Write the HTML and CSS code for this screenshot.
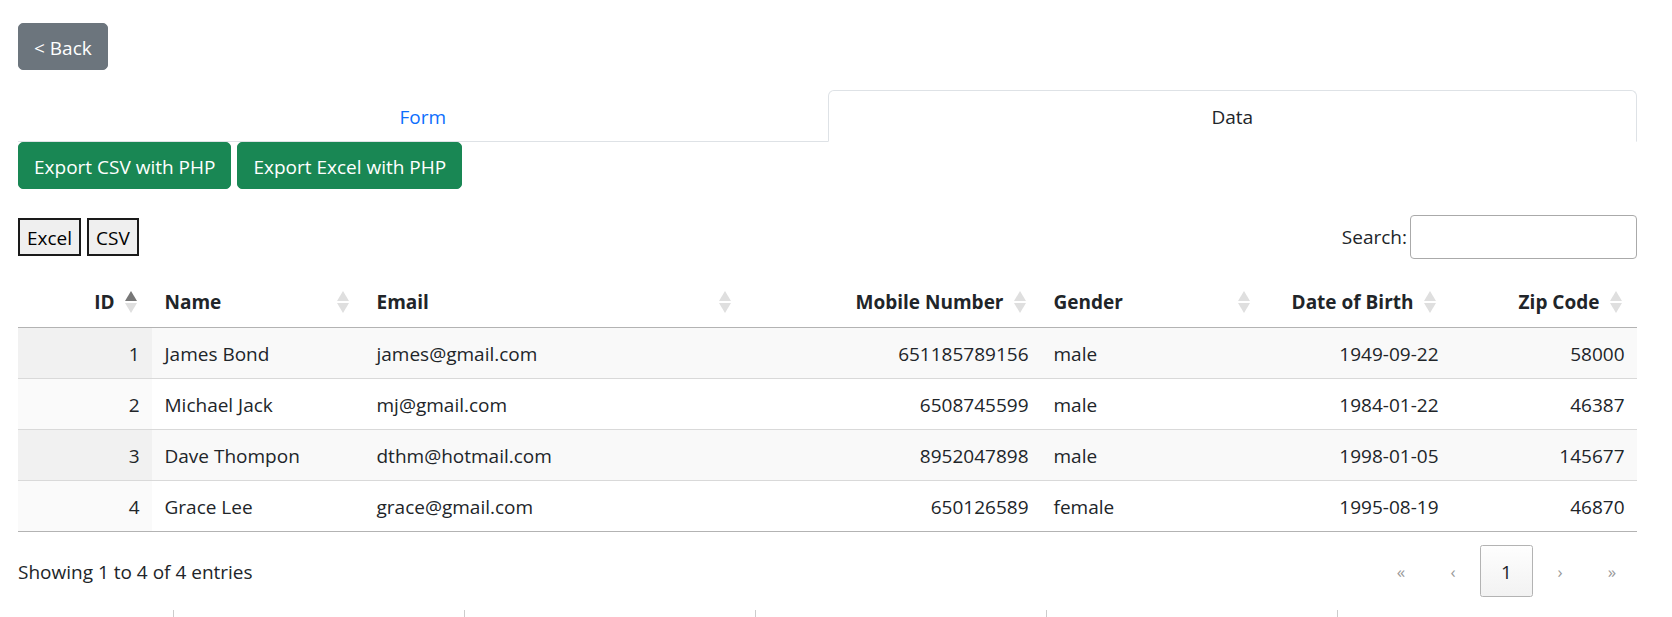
FILE: index.html
```html
<!DOCTYPE html>
<html lang="en">
<head>
    <meta charset="UTF-8">
    <meta name="viewport" content="width=device-width, initial-scale=1.0">
    <title>Users Data</title>
    <link rel="stylesheet" href="styles.css">
</head>
<body>
    <div class="page">
        <div class="back-row">
            <a class="btn btn-back" href="#">&lt; Back</a>
        </div>

        <ul class="tabs">
            <li><a href="#">Form</a></li>
            <li class="active"><a href="#">Data</a></li>
        </ul>

        <div class="exports">
            <button class="btn btn-green">Export CSV with PHP</button>
            <button class="btn btn-green">Export Excel with PHP</button>
        </div>

        <div class="dt-top">
            <div class="dt-buttons">
                <button>Excel</button>
                <button>CSV</button>
            </div>
            <label class="dt-search">Search:<input type="search"></label>
        </div>

        <table class="data">
            <colgroup>
                <col style="width: 134px">
                <col style="width: 212px">
                <col style="width: 382px">
                <col style="width: 295px">
                <col style="width: 224px">
                <col style="width: 186px">
                <col style="width: 186px">
            </colgroup>
            <thead>
                <tr>
                    <th class="num">ID<span class="sort asc"></span></th>
                    <th>Name<span class="sort"></span></th>
                    <th>Email<span class="sort"></span></th>
                    <th class="num">Mobile Number<span class="sort"></span></th>
                    <th>Gender<span class="sort"></span></th>
                    <th class="num">Date of Birth<span class="sort"></span></th>
                    <th class="num">Zip Code<span class="sort"></span></th>
                </tr>
            </thead>
            <tbody>
                <tr>
                    <td class="num sorted">1</td>
                    <td>James Bond</td>
                    <td>james@gmail.com</td>
                    <td class="num">651185789156</td>
                    <td>male</td>
                    <td class="num">1949-09-22</td>
                    <td class="num">58000</td>
                </tr>
                <tr>
                    <td class="num sorted">2</td>
                    <td>Michael Jack</td>
                    <td>mj@gmail.com</td>
                    <td class="num">6508745599</td>
                    <td>male</td>
                    <td class="num">1984-01-22</td>
                    <td class="num">46387</td>
                </tr>
                <tr>
                    <td class="num sorted">3</td>
                    <td>Dave Thompon</td>
                    <td>dthm@hotmail.com</td>
                    <td class="num">8952047898</td>
                    <td>male</td>
                    <td class="num">1998-01-05</td>
                    <td class="num">145677</td>
                </tr>
                <tr>
                    <td class="num sorted">4</td>
                    <td>Grace Lee</td>
                    <td>grace@gmail.com</td>
                    <td class="num">650126589</td>
                    <td>female</td>
                    <td class="num">1995-08-19</td>
                    <td class="num">46870</td>
                </tr>
            </tbody>
        </table>

        <div class="dt-bottom">
            <div class="dt-info">Showing 1 to 4 of 4 entries</div>
            <nav class="paging">
                <span class="page-btn disabled">&laquo;</span>
                <span class="page-btn disabled">&lsaquo;</span>
                <span class="page-btn current">1</span>
                <span class="page-btn disabled">&rsaquo;</span>
                <span class="page-btn disabled">&raquo;</span>
            </nav>
        </div>

        <div class="more">
            <div></div>
            <div></div>
            <div></div>
            <div></div>
            <div></div>
            <div></div>
        </div>
    </div>
</body>
</html>
```

FILE: styles.css
```css
* {
    box-sizing: border-box;
}
html, body {
    overflow: hidden;
}
body {
    margin: 0;
    font-family: "Open Sans", "Noto Sans", Arial, sans-serif;
    font-size: 19px;
    line-height: 30px;
    color: #212529;
    background-color: #fff;
}
.page {
    padding: 23px 35px 0 18px;
}

/* buttons */
.btn {
    display: inline-block;
    padding: 8.5px 15px 6.5px;
    border: 1px solid transparent;
    border-radius: 5px;
    color: #fff;
    font: inherit;
    line-height: 30px;
    text-decoration: none;
    cursor: pointer;
}
.btn-back {
    background-color: #6c757d;
    border-color: #6c757d;
}
.btn-green {
    background-color: #198754;
    border-color: #198754;
}
.back-row {
    display: flex;
    margin-bottom: 20px;
}

/* tabs */
.tabs {
    display: flex;
    list-style: none;
    margin: 0;
    padding: 0;
    border-bottom: 1px solid #dee2e6;
}
.tabs li {
    flex: 1;
    text-align: center;
    margin-bottom: -1px;
}
.tabs a {
    display: block;
    padding: 11px 20px 9px;
    border: 1px solid transparent;
    border-radius: 6px 6px 0 0;
    color: #0d6efd;
    text-decoration: none;
}
.tabs .active a {
    color: #212529;
    background-color: #fff;
    border-color: #dee2e6 #dee2e6 #fff;
}

.exports {
    display: flex;
    gap: 6px;
}

/* datatable toolbar */
.dt-top {
    display: flex;
    justify-content: space-between;
    align-items: center;
    margin-top: 26px;
    height: 44px;
}
.dt-buttons {
    display: flex;
    gap: 6px;
}
.dt-buttons button {
    font: inherit;
    line-height: 30px;
    padding: 2.5px 7px 1.5px;
    border: 2px solid #1a1a1a;
    border-radius: 0;
    background-color: #efefef;
    color: #000;
}
.dt-search {
    display: flex;
    align-items: center;
}
.dt-search input {
    width: 227px;
    height: 44px;
    margin-left: 3px;
    padding: 6px;
    border: 1px solid #aaa;
    border-radius: 4px;
    font: inherit;
}

/* table */
.data {
    width: 100%;
    margin-top: 16px;
    table-layout: fixed;
    border-collapse: separate;
    border-spacing: 0;
}
.data th {
    position: relative;
    padding: 12px 37.5px 10px 12.5px;
    border-bottom: 1px solid #b3b3b3;
    font-weight: 700;
    text-align: left;
    white-space: nowrap;
}
.data td {
    padding: 11px 12.5px 9px;
}
.data .num {
    text-align: right;
}
.data tbody tr + tr td {
    border-top: 1px solid #d9d9d9;
}
.data tbody tr:last-child td {
    border-bottom: 1px solid #b3b3b3;
}
.data tbody tr:nth-child(odd) td {
    background-color: #f9f9f9;
}
.data tbody tr:nth-child(odd) td.sorted {
    background-color: #f1f1f1;
}
.data tbody tr:nth-child(even) td.sorted {
    background-color: #fafafa;
}
.sort {
    position: absolute;
    right: 15px;
    top: 1px;
    bottom: 0;
    width: 12px;
}
.sort::before, .sort::after {
    content: "";
    position: absolute;
    left: 0;
    border-left: 6px solid transparent;
    border-right: 6px solid transparent;
}
.sort::before {
    bottom: calc(50% + 1px);
    border-bottom: 10px solid #dfdfdf;
}
.sort::after {
    top: calc(50% + 1px);
    border-top: 10px solid #dfdfdf;
}
.sort.asc::before {
    border-bottom-color: #777;
}

/* info + paging */
.dt-bottom {
    display: flex;
    justify-content: space-between;
    align-items: center;
    margin-top: 13px;
}
.dt-info {
    padding-top: 1px;
}
.paging {
    display: flex;
    gap: 2px;
}
.page-btn {
    min-width: 50px;
    padding: 11px 0 9px;
    border: 1px solid transparent;
    border-radius: 2.5px;
    text-align: center;
}
.page-btn.disabled {
    color: #9a9a9a;
    font-size: 17px;
}
.page-btn.current {
    min-width: 53px;
    padding: 11px 20px 9px;
    border-color: #b3b3b3;
    background: linear-gradient(to bottom, #fefefe 0%, #f2f2f2 100%);
}

/* next table peeking in at the bottom */
.more {
    display: grid;
    grid-template-columns: 155px repeat(4, 291px) 1fr;
    height: 20px;
    margin-top: 13px;
}
.more div + div {
    border-left: 1px solid #ccc;
}
```
